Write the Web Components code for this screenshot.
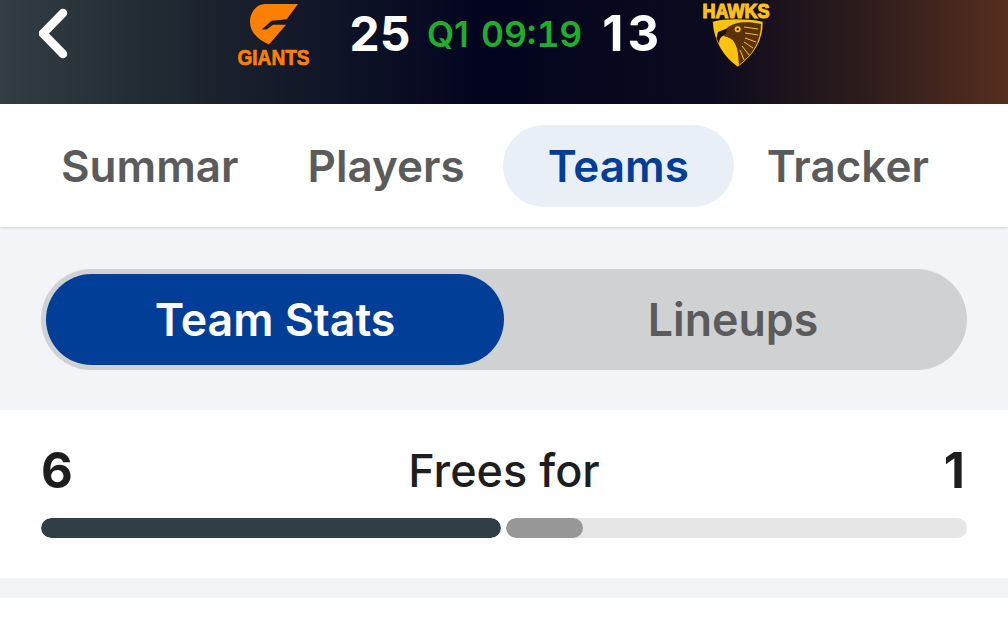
<!DOCTYPE html>
<html>
<head>
<meta charset="utf-8">
<style>
  html, body { margin: 0; padding: 0; background: #fff; }
  body { font-family: Inter, "Liberation Sans", sans-serif; width: 1008px; height: 631px; overflow: hidden; }
</style>
</head>
<body>
<match-page></match-page>
<script>
class ScoreHeader extends HTMLElement {
  constructor() {
    super();
    this.attachShadow({ mode: 'open' });
    this.shadowRoot.innerHTML = `
      <style>
        :host {
          display: flex;
          height: 104px;
          box-sizing: border-box;
          padding: 0 0 0 39px;
          align-items: flex-start;
          background: linear-gradient(90deg, #323e43 0%, #1a212d 22%, #020420 48%, #0b0a1e 70%, #2c1b1c 85%, #552e1e 100%);
        }
        .back { width: 30px; height: 52px; margin-top: 7px; }
        .giants { width: 90px; height: 72px; margin-left: 166px; }
        .score { font-size: 48px; font-weight: 700; color: #fff; line-height: 68px; }
        .home { margin-left: 24px; font-variant-numeric: tabular-nums; }
        .clock { display: flex; align-items: baseline; gap: 12px; color: #1fae2b; line-height: 68px; font-weight: 600; margin-left: 16px; }
        .quarter { font-size: 35px; }
        .time { font-size: 35.500px; font-variant-numeric: tabular-nums; }
        .away { margin-left: 20px; font-size: 49px; letter-spacing: 4px; }
        .hawks { width: 90px; height: 72px; margin-left: 33px; }
      </style>
      <svg class="back" viewBox="0 0 30 52"><path d="M24 6 L4 26.500 L24 47" fill="none" stroke="#fff" stroke-width="8.500" stroke-linecap="round" stroke-linejoin="miter"/></svg>
      <svg class="giants" viewBox="0 0 90 72">
        <path fill="#ff7f00" d="M63 4 H30 C21 4 15 13 15 22 C15 32 23 40 34 44.500 L51 24.700 H38 L31.700 29.500 H26.700 L36.700 20.700 L51.700 19.300 Z"/>
        <text x="2.500" y="65" font-family="'Liberation Sans Narrow', 'Liberation Sans', sans-serif" font-weight="700" font-size="22" fill="#ff7f00" stroke="#ff7f00" stroke-width=".7" textLength="72" lengthAdjust="spacingAndGlyphs">GIANTS</text>
      </svg>
      <span class="score home">25</span>
      <span class="clock"><span class="quarter">Q1</span><span class="time">09:19</span></span>
      <span class="score away">13</span>
      <svg class="hawks" viewBox="0 0 90 72">
        <text x="6.500" y="18" font-family="'Liberation Sans', sans-serif" font-weight="700" font-size="20" fill="#ffc20e" stroke="#ffc20e" stroke-width="1.200" textLength="67" lengthAdjust="spacingAndGlyphs">HAWKS</text>
        <path fill="#ffc20e" d="M16.700 21.700 C30 18.500 50 18.500 66.700 21.700 C67 40 58 55 41.700 66.700 C28 57 18 42 16.700 21.700 Z"/>
        <path fill="#5b3208" d="M31 28 C38 22 50 21 65 24 C65 42 56 55 43 65 C42 58 43 50 38 42 C36 38 30 37 28 36 Z"/>
        <path fill="#1c1006" d="M32 28 L22 32 L20.500 38 L23 44 C23 39 25 36 29 35 Z"/>
        <circle cx="41.700" cy="29.300" r="3" fill="#ffc20e"/>
        <circle cx="41.700" cy="29.300" r="1.200" fill="#3a2005"/>
        <path fill="none" stroke="#ffc20e" stroke-width="1" d="M48 27 L62 29 M49 33 L62 35 M49 38 L60 42 M48 42 L57 48 M46 46 L53 55 M44 50 L48 60"/>
      </svg>
    `;
  }
}

class NavTabs extends HTMLElement {
  constructor() {
    super();
    this.attachShadow({ mode: 'open' });
    this.shadowRoot.innerHTML = `
      <style>
        :host {
          display: flex;
          height: 123px;
          box-sizing: border-box;
          padding-left: 61px;
          align-items: center;
          background: #fff;
          box-shadow: 0 1px 2px rgba(0,0,0,.14);
          position: relative;
        }
      </style>
      <slot></slot>
    `;
  }
}

class NavTab extends HTMLElement {
  constructor() {
    super();
    this.attachShadow({ mode: 'open' });
    this.shadowRoot.innerHTML = `
      <style>
        :host {
          display: flex;
          height: 82px;
          align-items: center;
          font-size: 44px;
          font-weight: 600;
          color: #5b5b5b;
          white-space: nowrap;
        }
        :host([active]) {
          background: #e9eff7;
          color: #003e98;
          border-radius: 41px;
          padding: 0 45px;
        }
      </style>
      <slot></slot>
    `;
  }
}

class SegmentSwitch extends HTMLElement {
  constructor() {
    super();
    this.attachShadow({ mode: 'open' });
    this.shadowRoot.innerHTML = `
      <style>
        :host {
          display: flex;
          height: 101px;
          box-sizing: border-box;
          padding: 5px;
          background: #d0d1d3;
          border-radius: 51px;
        }
      </style>
      <slot></slot>
    `;
  }
}

class SegmentItem extends HTMLElement {
  constructor() {
    super();
    this.attachShadow({ mode: 'open' });
    this.shadowRoot.innerHTML = `
      <style>
        :host {
          display: flex;
          flex: 1;
          height: 91px;
          align-items: center;
          justify-content: center;
          font-size: 44.700px;
          font-weight: 600;
          color: #5b5b5b;
          border-radius: 46px;
        }
        :host([active]) { background: #003e98; color: #fff; }
      </style>
      <slot></slot>
    `;
  }
}

class StatRow extends HTMLElement {
  constructor() {
    super();
    this.attachShadow({ mode: 'open' });
    this.shadowRoot.innerHTML = `
      <style>
        :host {
          display: block;
          height: 168px;
          box-sizing: border-box;
          padding: 31px 41px 0;
          background: #fff;
        }
        .line {
          display: grid;
          grid-template-columns: 1fr auto 1fr;
          align-items: center;
          height: 56px;
          color: #1e1e1e;
          font-size: 45px;
          font-weight: 500;
        }
        .val { font-size: 49px; font-weight: 700; }
        .val.right { text-align: right; padding-right: 2px; }
        .bars { display: flex; gap: 5px; height: 20px; margin-top: 21px; }
        .bar { flex: 1; border-radius: 10px; background: #e6e6e6; overflow: hidden; }
        .bar div { height: 100%; border-radius: 10px; }
        .bar.home { flex: 0 0 460px; }
        .home div { width: 100%; background: #323e45; }
        .away div { width: 16.700%; background: #989898; }
      </style>
      <div class="line">
        <span class="val">${this.getAttribute('home')}</span>
        <span>${this.getAttribute('label')}</span>
        <span class="val right">${this.getAttribute('away')}</span>
      </div>
      <div class="bars">
        <div class="bar home"><div></div></div>
        <div class="bar away"><div></div></div>
      </div>
    `;
  }
}

class MatchPage extends HTMLElement {
  constructor() {
    super();
    this.attachShadow({ mode: 'open' });
    this.shadowRoot.innerHTML = `
      <style>
        :host { display: block; height: 631px; background: #fff; color: #1e1e1e; }
        .switch-wrap { height: 183px; box-sizing: border-box; padding: 42px 41px 0; background: #f2f4f8; }
        .gap { height: 20px; background: #f2f4f8; }
      </style>
      <score-header></score-header>
      <nav-tabs>
        <nav-tab style="margin-right:69px">Summar</nav-tab>
        <nav-tab style="margin-right:38px">Players</nav-tab>
        <nav-tab active>Teams</nav-tab>
        <nav-tab style="margin-left:33px">Tracker</nav-tab>
      </nav-tabs>
      <div class="switch-wrap">
        <segment-switch>
          <segment-item active>Team Stats</segment-item>
          <segment-item>Lineups</segment-item>
        </segment-switch>
      </div>
      <stat-row home="6" label="Frees for" away="1"></stat-row>
      <div class="gap"></div>
    `;
  }
}

customElements.define('score-header', ScoreHeader);
customElements.define('nav-tabs', NavTabs);
customElements.define('nav-tab', NavTab);
customElements.define('segment-switch', SegmentSwitch);
customElements.define('segment-item', SegmentItem);
customElements.define('stat-row', StatRow);
customElements.define('match-page', MatchPage);
</script>
</body>
</html>
